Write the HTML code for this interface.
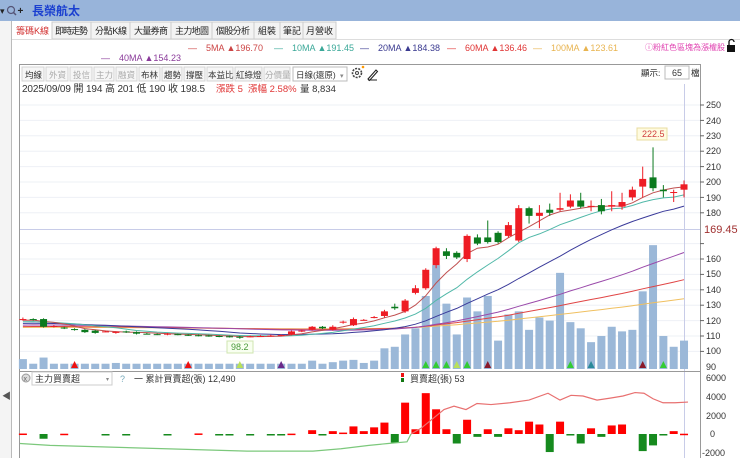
<!DOCTYPE html>
<html><head><meta charset="utf-8">
<style>
*{margin:0;padding:0;box-sizing:border-box}
body{width:740px;height:458px;overflow:hidden;background:#fff;font-family:"Liberation Sans","Noto Sans CJK TC",sans-serif;position:relative}
svg{position:absolute;left:0;top:0}
</style></head><body>
<svg id="s" width="740" height="458" viewBox="0 0 740 458" font-family="Liberation Sans, Noto Sans CJK TC, sans-serif">
<rect x="0" y="0" width="740" height="21" fill="#98b4da"/>
<text x="0" y="14" font-size="9" fill="#222">▾</text>
<circle cx="11" cy="10" r="3.5" fill="none" stroke="#557" stroke-width="1.2"/><line x1="13.5" y1="12.5" x2="16" y2="15" stroke="#557" stroke-width="1.5"/>
<text x="17.5" y="14" font-size="10" font-weight="bold" fill="#222">+</text>
<text x="32" y="15" font-size="12" font-weight="bold" fill="#1a3fd0">長榮航太</text>
<rect x="0" y="21" width="11" height="437" fill="#f4f4f4"/>
<line x1="11.5" y1="21" x2="11.5" y2="458" stroke="#bbb"/>
<text x="2" y="399" font-size="9" fill="#555">◀</text>
<g font-size="9" fill="#222">
<rect x="52" y="22" width="39" height="17" fill="#f3f3f3" stroke="#ccc"/>
<rect x="91" y="22" width="39" height="17" fill="#f3f3f3" stroke="#ccc"/>
<rect x="130" y="22" width="41" height="17" fill="#f3f3f3" stroke="#ccc"/>
<rect x="171" y="22" width="41" height="17" fill="#f3f3f3" stroke="#ccc"/>
<rect x="212" y="22" width="42" height="17" fill="#f3f3f3" stroke="#ccc"/>
<rect x="254" y="22" width="26" height="17" fill="#f3f3f3" stroke="#ccc"/>
<rect x="280" y="22" width="23" height="17" fill="#f3f3f3" stroke="#ccc"/>
<rect x="303" y="22" width="33" height="17" fill="#f3f3f3" stroke="#ccc"/>
<text x="16" y="34" fill="#d23030" textLength="33">籌碼K線</text>
<text x="55" y="34" textLength="33">即時走勢</text>
<text x="95" y="34" textLength="32">分點K線</text>
<text x="134" y="34" textLength="34">大量券商</text>
<text x="175" y="34" textLength="34">主力地圖</text>
<text x="216" y="34" textLength="34">個股分析</text>
<text x="258" y="34" textLength="18">組裝</text>
<text x="283" y="34" textLength="18">筆記</text>
<text x="306" y="34" textLength="27">月營收</text>
</g>
<line x1="12" y1="39.5" x2="740" y2="39.5" stroke="#ddd"/>
<g font-size="9">
<text x="188" y="51" fill="#c44">—</text><text x="206" y="51" fill="#c44">5MA ▲196.70</text>
<text x="274" y="51" fill="#3aa898">—</text><text x="292" y="51" fill="#3aa898">10MA ▲191.45</text>
<text x="360" y="51" fill="#3a3a90">—</text><text x="378" y="51" fill="#3a3a90">20MA ▲184.38</text>
<text x="447" y="51" fill="#e03535">—</text><text x="465" y="51" fill="#e03535">60MA ▲136.46</text>
<text x="533" y="51" fill="#e8b450">—</text><text x="551" y="51" fill="#e8b450">100MA ▲123.61</text>
<text x="101" y="61" fill="#8a3a9a">—</text><text x="119" y="61" fill="#8a3a9a">40MA ▲154.23</text>
<text x="645" y="50" fill="#e040b0" font-size="8">ⓘ粉紅色區塊為漲權股</text>
</g>
<rect x="727" y="45" width="8" height="7" fill="#111"/><path d="M729 45 v-3 a2.5 2.5 0 0 1 5 0" fill="none" stroke="#111" stroke-width="1.3"/>
<rect x="19.5" y="64.5" width="681" height="400" fill="none" stroke="#999"/>
<g font-size="8.5">
<g fill="#f6f6f6" stroke="#d4d4d4">
<rect x="22" y="67" width="22" height="14"/><rect x="46" y="67" width="22" height="14"/><rect x="70" y="67" width="22" height="14"/><rect x="94" y="67" width="20" height="14"/><rect x="116" y="67" width="21" height="14"/><rect x="139" y="67" width="21" height="14"/><rect x="162" y="67" width="20" height="14"/><rect x="184" y="67" width="21" height="14"/><rect x="207" y="67" width="26" height="14"/><rect x="235" y="67" width="27" height="14"/><rect x="264" y="67" width="26" height="14"/>
</g>
<rect x="293" y="67" width="54" height="14" fill="#fff" stroke="#bbb"/>
<text x="25" y="78" fill="#333">均線</text><text x="49" y="78" fill="#aaa">外資</text><text x="73" y="78" fill="#aaa">投信</text><text x="96" y="78" fill="#aaa">主力</text><text x="118" y="78" fill="#aaa">融資</text><text x="141" y="78" fill="#333">布林</text><text x="164" y="78" fill="#333">趨勢</text><text x="186" y="78" fill="#333">撐壓</text><text x="208" y="78" fill="#333">本益比</text><text x="236" y="78" fill="#333">紅綠燈</text><text x="265" y="78" fill="#aaa">分價量</text>
<text x="296" y="78" fill="#333">日線(還原)</text><text x="340" y="78" fill="#888" font-size="7">▾</text>
</g>
<circle cx="357" cy="73" r="4.5" fill="none" stroke="#444" stroke-width="1.6" stroke-dasharray="2 1.2"/><circle cx="357" cy="73" r="1.5" fill="none" stroke="#444"/>
<circle cx="363" cy="67" r="1.3" fill="#f90"/>
<path d="M368 79 l8 -9 l1.5 1.5 l-8 9 z M368 80 h9" fill="none" stroke="#222" stroke-width="1.1"/>
<text x="641" y="76" font-size="8.5" fill="#222">顯示:</text>
<rect x="665" y="66" width="24" height="13" fill="#fff" stroke="#bbb"/>
<text x="672" y="76" font-size="9" fill="#333">65</text>
<text x="691" y="76" font-size="8.5" fill="#222">檔</text>
<text x="22" y="92" font-size="10" fill="#333" textLength="183">2025/09/09 開 194  高 201  低 190  收 198.5</text>
<text x="216" y="92" font-size="9.5" fill="#e03535">漲跌 5</text>
<text x="248" y="92" font-size="9.5" fill="#e03535">漲幅 2.58%</text>
<text x="300" y="92" font-size="9.5" fill="#333">量 8,834</text>
<g id="grid" stroke="#eef0f6"></g>
<line x1="20" y1="229.5" x2="700" y2="229.5" stroke="#c8cce8"/>
<line x1="684.5" y1="84" x2="684.5" y2="458" stroke="#c8cce8"/>
<g id="g"></g>
<g font-size="9" fill="#333">
<text x="706" y="108">250</text><text x="706" y="124">240</text><text x="706" y="139">230</text><text x="706" y="154">220</text><text x="706" y="170">210</text><text x="706" y="185">200</text><text x="706" y="201">190</text><text x="706" y="216">180</text><text x="706" y="262">160</text><text x="706" y="277">150</text><text x="706" y="293">140</text><text x="706" y="308">130</text><text x="706" y="324">120</text><text x="706" y="339">110</text><text x="706" y="354">100</text><text x="706" y="370">90</text>
</g>
<text x="704" y="233" font-size="11" fill="#a03030">169.45</text>
<rect x="637" y="128" width="30" height="12" fill="#fffbe0" stroke="#e8dca0"/>
<text x="642" y="137" font-size="9" fill="#d04040">222.5</text>
<rect x="227" y="341" width="26" height="12" fill="#f8fff0" stroke="#cfe5b0"/>
<text x="231" y="350" font-size="9" fill="#4a9a3a">98.2</text>
<line x1="20" y1="371.5" x2="700" y2="371.5" stroke="#999"/>
<g font-size="9" fill="#333">
<text x="706" y="381">6000</text><text x="706" y="400">4000</text><text x="706" y="419">2000</text><text x="710" y="437">0</text><text x="702" y="456">-2000</text>
</g>
<circle cx="26" cy="378" r="4" fill="#ddd" stroke="#999"/><text x="23.5" y="381" font-size="7" fill="#666">x</text>
<rect x="32" y="372" width="80" height="13" fill="#fff" stroke="#ccc"/>
<text x="35" y="382" font-size="9" fill="#333">主力買賣超</text><text x="106" y="381" font-size="6" fill="#888">▾</text>
<text x="120" y="382" font-size="9" fill="#7ab">?</text>
<text x="134" y="382" font-size="9" fill="#333">一 累計買賣超(張) 12,490</text>
<rect x="401" y="373" width="3" height="4" fill="#e11"/><rect x="401" y="378" width="3" height="4" fill="#171"/>
<text x="410" y="382" font-size="9" fill="#333">買賣超(張) 53</text>
<g id="lo"></g>
</svg>
<script>
var NS="http://www.w3.org/2000/svg",g=document.getElementById('g'),lo=document.getElementById('lo'),gr=document.getElementById('grid');
function el(p,t,a){var e=document.createElementNS(NS,t);for(var k in a)e.setAttribute(k,a[k]);p.appendChild(e);return e}
function Y(p){return 105+(250-p)*1.54}
function X(i){return 22.9+10.33*i}
[250,240,230,220,210,200,190,180,160,150,140,130,120,110,100,90].forEach(function(p){el(gr,'line',{x1:20,x2:700,y1:Y(p),y2:Y(p)});el(gr,'line',{x1:700,x2:704,y1:Y(p),y2:Y(p),stroke:'#666'})});
var C=[[111,111,112,110],[111,110.5,111.5,110],[111,106,111.5,105.5],[106,106.5,107,105.5],[105.5,105,106,104.5],[104.5,104,105,103.5],[104,102.5,104.5,102],[103.5,102,104,101.5],[103,103,103.5,102.5],[102,102.8,103,101.5],[103,102.5,103.5,102],[102.5,101.5,103,101],[101.5,101.3,102,101],[101.2,101,101.6,100.6],[101,101.5,102,100.5],[101.2,100.8,101.5,100.5],[100.8,100.5,101.2,100],[100.5,100.2,101,99.8],[100.3,100,100.8,99.5],[100,99.7,100.4,99.2],[99.8,99.5,100.2,99],[99.5,99,100,98.2],[99.5,99.8,100.3,99.2],[99.8,100,100.5,99.4],[100,100.3,100.8,99.6],[100.3,100.6,101,100],[101,103,103.5,100.5],[103,103.5,104,102.5],[104,106,106.5,103.5],[106,105,106.5,104.5],[104,106,107,103.5],[109,109.3,110,108],[107,111,112,106.5],[110.5,110.5,111,110],[112,112.3,113,111.5],
[113,116,117,112],[119,118,121,117],[116,123,124,115],[128,131,133,127],[131,143,144,130],[146,157,158,144],[155,152,157,150],[154,151,155,150],[150,165,166,148],[164,160,166,159],[164,161,175,160],[167,161,168,160],[165,172,174,164],[162,183,185,161],[183,178,184,173],[178,180,185,170],[182,180,186,178],[182,183,193,181],[184,188,192,183],[188,184,193,183],[184,184.5,188,181],[185,181,189,179],[184,185,194,181],[184,187,193,182],[190,195,197,188],[197,202,210,190],[203,196,222.5,194],[195,194,198,190],[193,193.5,195,187],[195,198.5,201,190]];
var V=[85,82,86,82,82,82,82,82,82,82.5,82,82,82,82,82,82,82,82,82,82,82,82,82,82,82,82,82,82,84,82,83,84,84.5,82.5,84,92,93,101,105,126,146,121,101,125,116,126,97,114,116,104,112,110,141,109,105,96,100,106,103,104,129,159,100,93,97];
V.forEach(function(v,i){el(g,'rect',{x:X(i)-4,y:Y(v),width:8,height:369-Y(v),fill:'#9bb8d8'})});
var tri={5:'#e11',16:'#e11',21:'#b8e05a',25:'#6a2a8a',39:'#3c3',40:'#3c3',41:'#3c3',42:'#b8e05a',43:'#3c3',45:'#8a1a2a',53:'#3c3',55:'#2a8a9a',60:'#8a1a2a',62:'#3c3'};
for(var k in tri){var x=X(+k);el(g,'path',{d:'M'+(x-3.5)+' 368 L'+x+' 361 L'+(x+3.5)+' 368Z',fill:tri[k]})}
var cl=C.map(function(c){return c[1]});
function ma(n,pad,col){var pts=[];for(var i=0;i<cl.length;i++){var s=0;for(var j=i-n+1;j<=i;j++)s+=j<0?pad:cl[j];pts.push(X(i).toFixed(1)+','+Y(s/n).toFixed(1))}el(g,'polyline',{points:pts.join(' '),fill:'none',stroke:col,'stroke-width':1})}
ma(100,105.5,'#f0c060');ma(60,106,'#e04545');ma(40,107,'#9a4aaa');ma(20,108,'#3a3a9a');ma(10,109,'#50b8a8');ma(5,110,'#c05050');
C.forEach(function(c,i){var x=X(i),up=c[1]>=c[0],col=up?'#ee1c24':'#0b7a1e';el(g,'line',{x1:x,x2:x,y1:Y(c[2]),y2:Y(c[3]),stroke:col});var t=Y(Math.max(c[0],c[1])),b=Y(Math.min(c[0],c[1]));el(g,'rect',{x:x-3.5,y:t,width:7,height:Math.max(1,b-t),fill:col})});
function LY(v){return 434-v*0.0095}
var B={0:50,2:-500,4:30,8:-40,10:-30,14:-40,17:60,19:-40,20:-50,22:-60,24:-30,25:-50,26:40,28:400,29:-100,30:300,31:150,32:800,33:300,34:700,35:1200,36:-900,37:3300,38:500,39:4300,40:2600,41:500,42:-1000,43:1500,44:-300,45:500,46:-300,47:600,48:400,49:1300,50:1000,51:-1900,52:1300,53:-100,54:-1000,55:600,56:-300,57:900,58:1000,60:-1800,61:-1200,62:-100,63:300,64:30};
for(var k in B){var v=B[k],x=X(+k),t=LY(Math.max(v,0)),b=LY(Math.min(v,0));el(lo,'rect',{x:x-4,y:t,width:8,height:Math.max(1.5,b-t),fill:v>=0?'#f00':'#168a1e'})}
var gp=[[20,-1000],[50,-1200],[247,-1800],[313,-1800],[341,-1550],[369,-1200],[388,-1000],[407,-820],[411,0]],rp=[[411,0],[421,600],[444,2570],[454,2930],[466,2570],[477,3210],[491,3100],[510,3290],[529,3570],[548,4290],[560,3570],[571,4070],[583,4000],[597,3570],[611,3790],[623,4000],[635,4360],[644,4290],[653,3710],[663,3290],[675,3290],[688,3360]];
el(lo,'polyline',{points:gp.map(function(p){return p[0]+','+LY(p[1])}).join(' '),fill:'none',stroke:'#7cc87c','stroke-width':1.2});
el(lo,'polyline',{points:rp.map(function(p){return p[0]+','+LY(p[1])}).join(' '),fill:'none',stroke:'#e87070','stroke-width':1.2});
</script>
</body></html>
